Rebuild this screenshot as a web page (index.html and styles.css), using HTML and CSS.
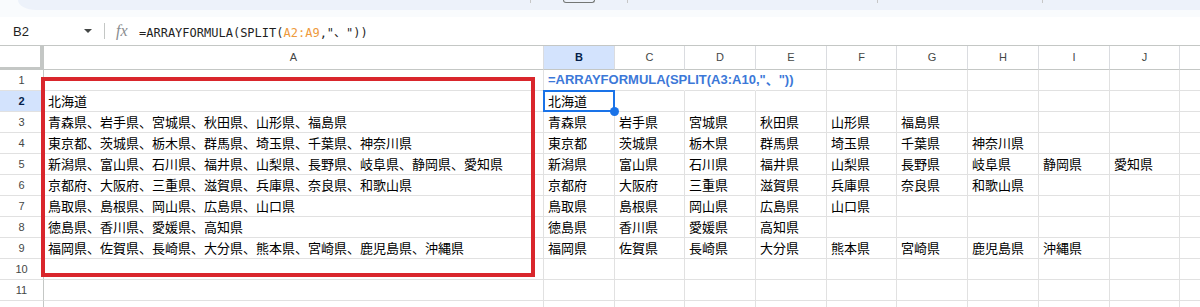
FILE: index.html
```html
<!DOCTYPE html>
<html lang="ja">
    <head>
        <meta charset="utf-8">
        <meta name="viewport" content="width=device-width, initial-scale=1.0">
        <title>SPLIT - スプレッドシート</title>
        <link rel="stylesheet" href="styles.css">
    </head>
    <body>
        <!-- chrome above the sheet: bottom of the toolbar and the formula bar -->
        <div class="chrome">
            <div class="toolbar">
                <span class="tb-sep first"></span>
                <span class="tb-box"></span>
                <span class="tb-sep second"></span>
                <span class="tb-sep third"></span>
                <span class="tb-sep fourth"></span>
            </div>
        </div>
        <div class="formula-bar">
            <div class="name-box">
                <span>B2</span>
                <svg class="caret" width="8" height="4" viewBox="0 0 8 4"><path d="M0 0 L8 0 L4 4 Z" fill="#444746"/></svg>
            </div>
            <span class="fb-sep"></span>
            <span class="fx">fx</span>
            <span class="formula">=ARRAYFORMULA(SPLIT(<span class="range">A2:A9</span>,"、"))</span>
        </div>

        <!-- the sheet itself -->
        <div class="sheet">
            <div class="grid">
                <!-- column headers (K is off screen) -->
                <div class="corner"></div>
                <div class="ch">A</div>
                <div class="ch sel">B</div>
                <div class="ch">C</div>
                <div class="ch">D</div>
                <div class="ch">E</div>
                <div class="ch">F</div>
                <div class="ch">G</div>
                <div class="ch">H</div>
                <div class="ch">I</div>
                <div class="ch">J</div>
                <div class="ch"></div>

                <!-- row 1 -->
                <div class="rh">1</div>
                <div class="cell"></div>
                <div class="cell ov note">=ARRAYFORMULA(SPLIT(A3:A10,"、"))</div>
                <div class="cell ov"></div>
                <div class="cell ov"></div>
                <div class="cell"></div><div class="cell"></div><div class="cell"></div><div class="cell"></div><div class="cell"></div><div class="cell"></div><div class="cell"></div>

                <!-- row 2 -->
                <div class="rh sel">2</div>
                <div class="cell">北海道</div>
                <div class="cell active">北海道</div>
                <div class="cell"></div><div class="cell"></div><div class="cell"></div><div class="cell"></div><div class="cell"></div><div class="cell"></div><div class="cell"></div><div class="cell"></div><div class="cell"></div>

                <!-- row 3 -->
                <div class="rh">3</div>
                <div class="cell">青森県、岩手県、宮城県、秋田県、山形県、福島県</div>
                <div class="cell">青森県</div><div class="cell">岩手県</div><div class="cell">宮城県</div><div class="cell">秋田県</div><div class="cell">山形県</div><div class="cell">福島県</div>
                <div class="cell"></div><div class="cell"></div><div class="cell"></div><div class="cell"></div>

                <!-- row 4 -->
                <div class="rh">4</div>
                <div class="cell">東京都、茨城県、栃木県、群馬県、埼玉県、千葉県、神奈川県</div>
                <div class="cell">東京都</div><div class="cell">茨城県</div><div class="cell">栃木県</div><div class="cell">群馬県</div><div class="cell">埼玉県</div><div class="cell">千葉県</div><div class="cell">神奈川県</div>
                <div class="cell"></div><div class="cell"></div><div class="cell"></div>

                <!-- row 5 -->
                <div class="rh">5</div>
                <div class="cell">新潟県、富山県、石川県、福井県、山梨県、長野県、岐阜県、静岡県、愛知県</div>
                <div class="cell">新潟県</div><div class="cell">富山県</div><div class="cell">石川県</div><div class="cell">福井県</div><div class="cell">山梨県</div><div class="cell">長野県</div><div class="cell">岐阜県</div><div class="cell">静岡県</div><div class="cell">愛知県</div>
                <div class="cell"></div>

                <!-- row 6 -->
                <div class="rh">6</div>
                <div class="cell">京都府、大阪府、三重県、滋賀県、兵庫県、奈良県、和歌山県</div>
                <div class="cell">京都府</div><div class="cell">大阪府</div><div class="cell">三重県</div><div class="cell">滋賀県</div><div class="cell">兵庫県</div><div class="cell">奈良県</div><div class="cell">和歌山県</div>
                <div class="cell"></div><div class="cell"></div><div class="cell"></div>

                <!-- row 7 -->
                <div class="rh">7</div>
                <div class="cell">鳥取県、島根県、岡山県、広島県、山口県</div>
                <div class="cell">鳥取県</div><div class="cell">島根県</div><div class="cell">岡山県</div><div class="cell">広島県</div><div class="cell">山口県</div>
                <div class="cell"></div><div class="cell"></div><div class="cell"></div><div class="cell"></div><div class="cell"></div>

                <!-- row 8 -->
                <div class="rh">8</div>
                <div class="cell">徳島県、香川県、愛媛県、高知県</div>
                <div class="cell">徳島県</div><div class="cell">香川県</div><div class="cell">愛媛県</div><div class="cell">高知県</div>
                <div class="cell"></div><div class="cell"></div><div class="cell"></div><div class="cell"></div><div class="cell"></div><div class="cell"></div>

                <!-- row 9 -->
                <div class="rh">9</div>
                <div class="cell">福岡県、佐賀県、長崎県、大分県、熊本県、宮崎県、鹿児島県、沖縄県</div>
                <div class="cell">福岡県</div><div class="cell">佐賀県</div><div class="cell">長崎県</div><div class="cell">大分県</div><div class="cell">熊本県</div><div class="cell">宮崎県</div><div class="cell">鹿児島県</div><div class="cell">沖縄県</div>
                <div class="cell"></div><div class="cell"></div>

                <!-- rows 10 - 12 are empty -->
                <div class="rh">10</div>
                <div class="cell"></div><div class="cell"></div><div class="cell"></div><div class="cell"></div><div class="cell"></div><div class="cell"></div><div class="cell"></div><div class="cell"></div><div class="cell"></div><div class="cell"></div><div class="cell"></div>
                <div class="rh">11</div>
                <div class="cell"></div><div class="cell"></div><div class="cell"></div><div class="cell"></div><div class="cell"></div><div class="cell"></div><div class="cell"></div><div class="cell"></div><div class="cell"></div><div class="cell"></div><div class="cell"></div>
                <div class="rh">12</div>
                <div class="cell"></div><div class="cell"></div><div class="cell"></div><div class="cell"></div><div class="cell"></div><div class="cell"></div><div class="cell"></div><div class="cell"></div><div class="cell"></div><div class="cell"></div><div class="cell"></div>
            </div>

            <!-- red frame drawn over column A -->
            <div class="annotation"></div>
        </div>
    </body>
</html>
```

FILE: styles.css
```css
/* page */
body {
    margin: 0;
    background-color: #fff;
    font-family: "Liberation Sans", Arial, sans-serif;
    overflow: hidden;
}

/* bottom edge of the toolbar pill */
.chrome {
    height: 17px;
    background-color: #f9fbfd;
}
.toolbar {
    display: flex;
    align-items: flex-start;
    height: 10px;
    margin-left: 18px;
    background-color: #edf2fa;
    border-bottom-left-radius: 18px 10px;
}
.tb-sep {
    width: 1px;
    height: 3px;
    background-color: #c7c7c7;
}
.tb-sep.first { margin-left: 512px; }
.tb-sep.second { margin-left: 32px; }
.tb-sep.third { margin-left: 249px; }
.tb-sep.fourth { margin-left: 164px; }
.tb-box {
    width: 32px;
    height: 3px;
    margin-left: 32px;
    border: 1px solid #747775;
    border-top: none;
    border-radius: 0 0 4px 4px;
    box-sizing: border-box;
}

/* formula bar */
.formula-bar {
    display: flex;
    align-items: center;
    height: 28px;
    background-color: #fff;
    border-bottom: 1px solid #c4c7c5;
}
.name-box {
    display: flex;
    align-items: center;
    justify-content: space-between;
    width: 92px;
    padding-left: 13px;
    box-sizing: border-box;
    font-size: 13px;
    color: #1f1f1f;
}
.caret {
    display: block;
}
.fb-sep {
    width: 1px;
    height: 16px;
    margin-left: 12px;
    background-color: #c4c7c5;
}
.fx {
    width: 14px;
    margin-left: 11px;
    font-family: "Liberation Serif", serif;
    font-style: italic;
    font-size: 16px;
    color: #8a8d90;
}
.formula {
    margin-left: 9px;
    font-family: "DejaVu Sans Mono", "Noto Sans CJK JP", monospace;
    font-size: 12px;
    color: #1f1f1f;
}
.range {
    color: #ee9a3c;
}

/* the grid of cells */
.sheet {
    position: relative;
}
.grid {
    display: grid;
    grid-template-columns: 44px 500px 71px 70px 71px 71px 70px 71px 71px 71px 70px 71px;
    grid-template-rows: 24px;
    grid-auto-rows: 21px;
    width: 1251px;
}
.corner {
    border-right: 4px solid #c4c7c5;
    border-bottom: 3px solid #c4c7c5;
}
.ch {
    border-right: 1px solid #dadce0;
    border-bottom: 1px solid #c4c7c5;
    text-align: center;
    font-size: 11px;
    line-height: 23px;
    color: #444746;
}
.rh {
    border-right: 1px solid #c4c7c5;
    border-bottom: 1px solid #e1e1e1;
    text-align: center;
    font-size: 11px;
    line-height: 20px;
    color: #444746;
}
.ch.sel,
.rh.sel {
    background-color: #d3e3fd;
    font-weight: bold;
    color: #041e49;
}
.cell {
    border-right: 1px solid #e1e1e1;
    border-bottom: 1px solid #e1e1e1;
    padding: 0 4px;
    font-family: "Noto Sans CJK JP", sans-serif;
    font-size: 13px;
    line-height: 20px;
    color: #000;
    white-space: nowrap;
    overflow: hidden;
}
/* text of B1 runs over C1 and D1, so their gridlines are hidden */
.cell.ov {
    border-right-color: transparent;
    overflow: visible;
}
.note {
    font-family: "Liberation Sans", Arial, "Noto Sans CJK JP", sans-serif;
    font-weight: bold;
    color: #3c78d8;
}

/* selected cell B2 with its fill handle */
.active {
    position: relative;
    z-index: 2;
    overflow: visible;
}
.active::before {
    content: "";
    position: absolute;
    top: -1px;
    left: -1px;
    right: -1px;
    bottom: -1px;
    border: 2px solid #1a73e8;
}
.active::after {
    content: "";
    position: absolute;
    right: -5px;
    bottom: -5px;
    width: 9px;
    height: 9px;
    border-radius: 50%;
    background-color: #1a73e8;
}

/* red frame around column A */
.annotation {
    position: absolute;
    left: 41px;
    top: 31px;
    width: 494px;
    height: 200px;
    border: 4px solid #d9262c;
    box-sizing: border-box;
    z-index: 3;
}
```
